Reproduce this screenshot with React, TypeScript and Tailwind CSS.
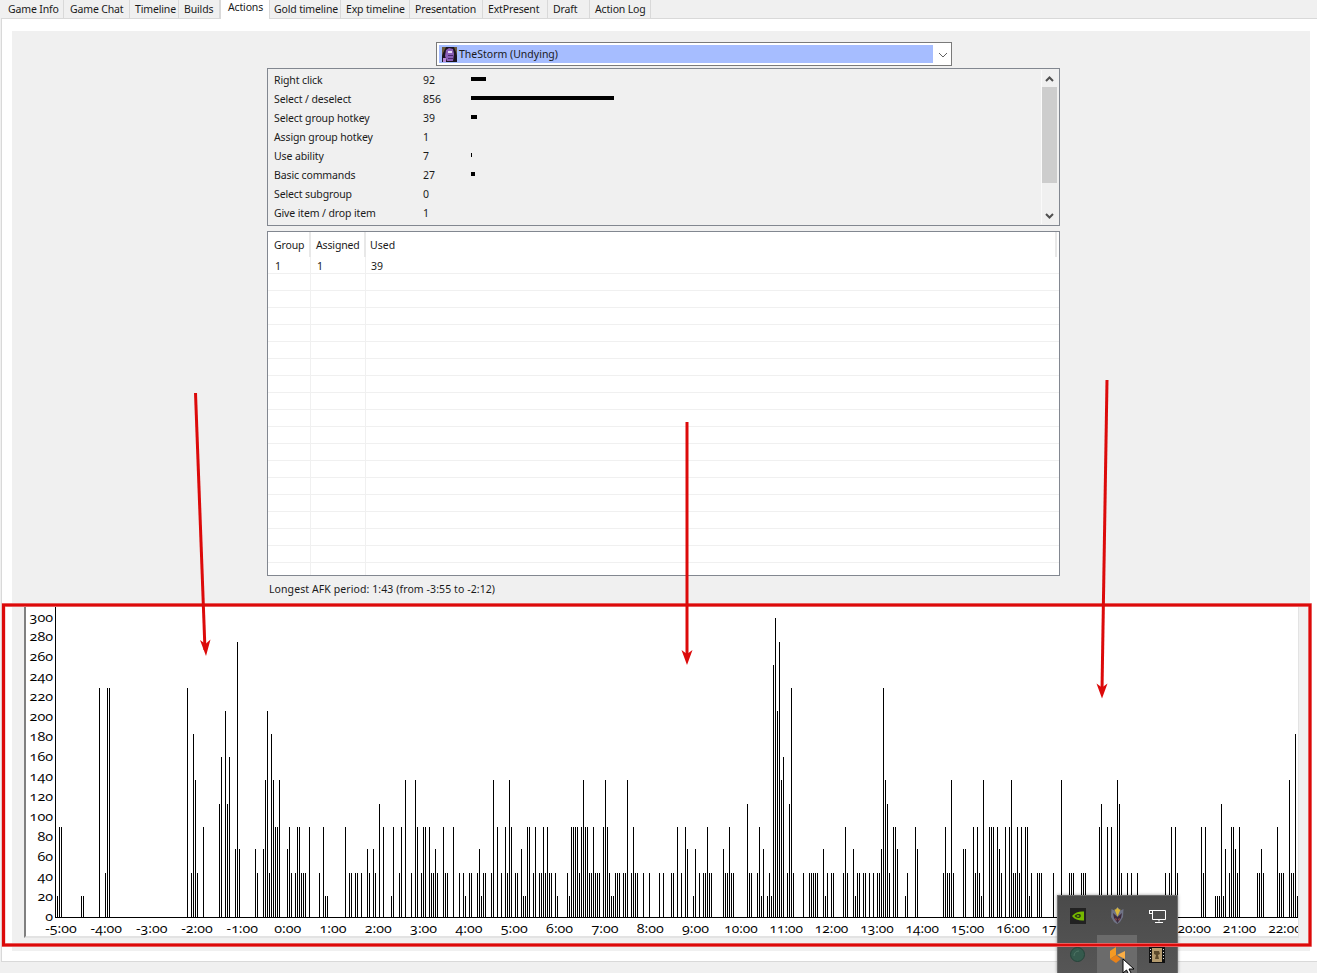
import React from "react";

const tabs = [
  { label: "Game Info", w: 62, pl: 6 },
  { label: "Game Chat", w: 66, pl: 6 },
  { label: "Timeline", w: 49, pl: 5 },
  { label: "Builds", w: 41, pl: 5 },
  { label: "Actions", w: 50, pl: 7, active: true },
  { label: "Gold timeline", w: 71, pl: 4 },
  { label: "Exp timeline", w: 69, pl: 5 },
  { label: "Presentation", w: 73, pl: 5 },
  { label: "ExtPresent", w: 65, pl: 5 },
  { label: "Draft", w: 42, pl: 5 },
  { label: "Action Log", w: 61, pl: 5 },
];

const stats = [
  { name: "Right click", value: "92", bar: 15 },
  { name: "Select / deselect", value: "856", bar: 143 },
  { name: "Select group hotkey", value: "39", bar: 6 },
  { name: "Assign group hotkey", value: "1", bar: 0 },
  { name: "Use ability", value: "7", bar: 1 },
  { name: "Basic commands", value: "27", bar: 4 },
  { name: "Select subgroup", value: "0", bar: 0 },
  { name: "Give item / drop item", value: "1", bar: 0 },
];

const LEVEL: Record<string, number> = { a: 21, b: 44, c: 68, d: 90, e: 113, f: 137, g: 160, h: 183, i: 206, j: 229, k: 252, l: 275, m: 299 };

const BARS =
  "57a 59d 61d 81a 83a 99j 105b 107j 109j 187j 191b 193h 195f 197b 203d 219e 221g 225i 227e 229g 235c 237l 239c 255c 257b 263c 265f 267i 269b 271h 273f 275d 277d 279f 287c 289d 291b 295b 297d 299d 301b 303b 305b 309d 319b 323d 325a 327a " +
  "345d 349b 351b 355b 357b 361b 367c 369b 373c 375b 379e 383d 391a 393d 399b 401d 405f 411b 415f 417d 421b 423d 425d 429d 431b 433b 435c 437b 443d 445b 447b 453d 459b 463b 465a 469b 471b 477b 479c 481a 483b 485b 491b 493f 497d 501b 505d 507b 509f 511d 515b 517b 521c 523a 525a 527d 529d 533b 535d 539b 541b 543d 545b 547d 549b 551b 555b 557a 567b 569a 571d 573d 575d 577d 579b 581d 583f 585d 587d 589b 591b 593d 595b 597b 599b 603d 605f 607d 609b 611a 613a 615b 617b 619b 623b 625b 627f 631b 633d 635b 637b 643b 649b 659b " +
  "663b 671b 673b 677d 681b 685d 687c 693a 695c 699b 703b 705b 707d 709b 711b 723c 725b 727b 729d 731b 733b 747e 749b 751b 757b 759d 761a 763c 767a 769b 771a 773k 775m 777i 779l 781f 783g 787b 789e 791j 793b 803b 809b 811b 813b 815b 817b 823c 825a 827b 831b 833b 843b 845d 847b 853c 855a 857b 859b 863b 865b 869b 873b 877b 879b 881c 883j 885f 887e 889b 893d 895d 897c 905a 907b 915d 917c 943b 945d 947b 949b 951f 953b 963c 965c 973d 975b 977d 979b 981a 983f " +
  "989d 991d 993d 997d 999c 1001b 1005d 1009d 1011f 1013b 1015b 1017d 1019b 1021d 1025d 1027d 1029a 1031b 1037b 1039b 1041b 1053b 1061f 1069b 1071b 1073b 1081b 1083b 1085b 1099d 1101e 1107d 1111d 1117f 1119e 1121b 1127b 1131b 1137b 1165b 1169b 1171d 1175d 1177b 1201d 1203b 1205d 1215a 1217a 1219a 1221e 1223a 1225c 1229b 1231d 1233d 1235c 1237b 1239d 1257b 1259b 1261c 1263b 1277d 1279b 1281b 1283b 1289f 1291b 1293b 1295h 1297a";

const bars = BARS.split(" ").map((s) => ({ x: parseInt(s, 10), h: LEVEL[s[s.length - 1]] }));

const xLabels = ["-5:00", "-4:00", "-3:00", "-2:00", "-1:00", "0:00", "1:00", "2:00", "3:00", "4:00", "5:00", "6:00", "7:00", "8:00", "9:00", "10:00", "11:00", "12:00", "13:00", "14:00", "15:00", "16:00", "17:00", "18:00", "19:00", "20:00", "21:00", "22:00"];
const yLabels = Array.from({ length: 16 }, (_, i) => i * 20);

function Chart() {
  return (
    <svg viewBox="26 606 1272 330" className="block w-[1272px] h-[330px] bg-white oldstyle-nums">
      <line x1="55.5" y1="606" x2="55.5" y2="918" stroke="#000" />
      <line x1="55" y1="917.5" x2="1298" y2="917.5" stroke="#000" />
      {bars.map((b) => (
        <rect key={b.x} x={b.x} y={917 - b.h} width="1" height={b.h} fill="#000" />
      ))}
      <g fontFamily="'Open Sans', sans-serif" fontSize="13" fill="#000" style={{ fontFeatureSettings: '"onum"' }}>
        {yLabels.map((v, i) => {
          const s = String(v);
          const w = s.length * 7.8;
          return (
            <text key={v} x={53 - w} y={920.5 - i * 19.93} textLength={w} lengthAdjust="spacingAndGlyphs">
              {s}
            </text>
          );
        })}
        {xLabels.map((s, i) => {
          const w = s[0] === "-" ? 31.5 : s.length === 4 ? 27 : 33.5;
          return (
            <text key={s} x={61 + 45.33 * i - w / 2} y={933} textLength={w} lengthAdjust="spacingAndGlyphs">
              {s}
            </text>
          );
        })}
      </g>
    </svg>
  );
}

function HeroIcon() {
  return (
    <svg width="15" height="15" viewBox="0 0 15 15" className="shrink-0">
      <rect width="15" height="15" fill="#1c1420" />
      <path d="M0 0h4L1 6 0 9zM15 0h-3l2 5 1 4z" fill="#6b5a3a" />
      <path d="M4 3l3-2 4 1 1 5-1 7H5L3 9z" fill="#8b5fb8" />
      <path d="M6 4h4v2H6z" fill="#e8d8f8" />
      <path d="M6 8h5v1H6zM6 11h5v1H6z" fill="#4a2a70" />
      <path d="M1 11h3v4H1z" fill="#b98ad8" />
    </svg>
  );
}

function Tray() {
  return (
    <div className="absolute left-[1057px] top-[895px] w-[121px] h-[78px] bg-gradient-to-b from-[#4a4a4a] to-[#565656] border-t border-x border-[#6e6e6e] shadow-[0_0_3px_rgba(0,0,0,0.4)]">
      <div className="grid grid-cols-[39px_40px_40px] grid-rows-[39px_39px] h-full">
        <div className="flex items-center justify-center">
          <svg width="16" height="16" viewBox="0 0 16 16">
            <rect width="16" height="16" fill="#222" />
            <path d="M2 8c3-4 8-5 12-4.500v9C10 13 5 12 2 8z" fill="#76b900" />
            <path d="M4.500 8c2-2 4-2.500 6-1.500 1 1.500 0 3.500-2 3.500-2 0-3-1-4-2z" fill="#2a3a10" />
            <path d="M6.500 8c1-1 2-1 3 0-1 1-2 1-3 0z" fill="#8fd400" />
          </svg>
        </div>
        <div className="flex items-center justify-center">
          <svg width="13" height="17" viewBox="0 0 13 17">
            <path d="M0.500 2l3 1.500L6.500 0l3 3.500 3-1.500-0.500 8-3 5-3 2-3-2-3-5z" fill="#6f7386" />
            <path d="M2 6l4.500 4L11 6l-1 5-3.500 5L3 11z" fill="#3c2a3c" />
            <path d="M3.500 2.500l3 7 3-7-1.500 0-1.500-2-1.500 2z" fill="#d9b63a" />
            <path d="M4 11l2 1-1 2zM9 11l-2 1 1 2z" fill="#a14a4a" />
          </svg>
        </div>
        <div className="flex items-center justify-center">
          <svg width="17" height="14" viewBox="0 0 17 14" fill="none" stroke="#fff">
            <path d="M3.500 1.500h13v9h-13M3.500 5v5.500M10 10.500v2M6 13.500h8" />
            <rect x="0.500" y="1.500" width="3" height="3" />
          </svg>
        </div>
        <div className="flex items-center justify-center">
          <svg width="15" height="15" viewBox="0 0 15 15">
            <circle cx="7.500" cy="7.500" r="7" fill="#355a4d" stroke="#26443a" />
            <path d="M4 9c0-3 2-5 5-5" fill="none" stroke="#4f7565" />
          </svg>
        </div>
        <div className="flex items-center justify-center bg-[#6b6b6b]">
          <svg width="15" height="16" viewBox="0 0 15 16">
            <path d="M0 4l6-4v8l-6 4z" fill="#f59a23" />
            <path d="M0 12l6-4 5 4-5 4z" fill="#e8821a" />
            <path d="M7 8l8-4v8z" fill="#fbae45" />
          </svg>
        </div>
        <div className="flex items-center justify-center">
          <svg width="16" height="16" viewBox="0 0 16 16">
            <rect width="16" height="16" fill="#111" />
            <rect x="3" y="1" width="10" height="14" fill="#b49b6e" />
            <path d="M5 4h5l1 3-2 1 1 4H6l1-4-2-1z" fill="#5c4a2c" />
            <path d="M1 2h1v1H1zM1 5h1v1H1zM1 8h1v1H1zM1 11h1v1H1zM14 2h1v1h-1zM14 5h1v1h-1zM14 8h1v1h-1zM14 11h1v1h-1z" fill="#ddd" />
          </svg>
        </div>
      </div>
    </div>
  );
}

function Annotations() {
  return (
    <svg viewBox="0 0 1317 973" className="absolute left-0 top-0 w-[1317px] h-[973px] pointer-events-none">
      <rect x="3.500" y="605" width="1306.500" height="340" fill="none" stroke="#f3b0b0" strokeWidth="4" />
      <rect x="3.500" y="605" width="1306.500" height="340" fill="none" stroke="#dc0a0a" strokeWidth="3" />
      <g stroke="#dc0a0a" strokeWidth="3" fill="none">
        <line x1="195.500" y1="393" x2="205" y2="650" />
        <line x1="687" y1="422" x2="687" y2="656" />
        <line x1="1107" y1="380" x2="1102" y2="690" />
      </g>
      <g fill="#dc0a0a">
        <path d="M206 656l-6-16 5.500 4 5-4.500z" />
        <path d="M687 665l-5.500-15 5.500 4 5.500-4z" />
        <path d="M1102 698.500l-5.500-15 5.500 4 5.500-4z" />
      </g>
    </svg>
  );
}

export default function App() {
  return (
    <div className="font-['Noto_Sans',sans-serif] relative w-[1317px] h-[973px] overflow-hidden bg-[#f0f0f0] text-[10.5px] leading-none text-[#1a1a1a] flex flex-col">
      <div className="flex h-[18px] pl-[2px] items-start whitespace-nowrap tracking-[-0.15px]">
        {tabs.map((t) =>
          t.active ? (
            <div key={t.label} style={{ width: t.w, paddingLeft: t.pl }} className="relative z-10 h-[19px] bg-white border-x border-[#d9d9d9] pt-[1px] flex items-start">
              <span className="leading-[12px]">{t.label}</span>
            </div>
          ) : (
            <div key={t.label} style={{ width: t.w, paddingLeft: t.pl }} className="h-[18px] border-r border-[#d9d9d9] pt-[3px] flex items-start">
              <span className="leading-[12px]">{t.label}</span>
            </div>
          )
        )}
      </div>
      <div className="ml-[1px] h-[944px] bg-white border-l border-t border-b border-[#d9d9d9] pl-[10px] pt-[12px]">
        <div className="w-[1298px] h-[920px] bg-[#f0f0f0] pt-[11px] flex flex-col">
          <div className="ml-[424px] w-[516px] h-[24px] bg-white border border-[#7a7a7a] p-[2px] pr-0 flex items-center">
            <div className="w-[494px] h-[18px] bg-[#a6bdff] flex items-center pl-[3px] gap-[2px]">
              <HeroIcon />
              <span className="leading-[12px]">TheStorm (Undying)</span>
            </div>
            <div className="flex-1 flex items-center justify-center pt-[2px] pl-[1px]">
              <svg width="10" height="6" viewBox="0 0 10 6" fill="none" stroke="#606060">
                <path d="M1 1l4 4 4-4" />
              </svg>
            </div>
          </div>

          <div className="mt-[2px] ml-[255px] w-[793px] h-[158px] border border-[#828790] flex">
            <div className="flex-1 pt-[1px] pl-[6px]">
              {stats.map((s) => (
                <div key={s.name} className="h-[19px] flex items-center">
                  <span className="w-[149px] leading-[12px] tracking-[-0.12px]">{s.name}</span>
                  <span className="w-[48px] leading-[12px]">{s.value}</span>
                  <div style={{ width: s.bar }} className={`bg-black h-[4px] mb-[2px] ${s.bar === 0 ? "hidden" : ""}`} />
                </div>
              ))}
            </div>
            <div className="w-[16px] border-l border-[#fafafa] flex flex-col items-center my-[1px] mr-[2px]">
              <div className="h-[17px] flex items-center justify-center">
                <svg width="9" height="6" viewBox="0 0 9 6" fill="none" stroke="#505050" strokeWidth="2">
                  <path d="M1 5l3.500-3.500L8 5" />
                </svg>
              </div>
              <div className="w-full h-[96px] bg-[#cdcdcd]" />
              <div className="mt-auto h-[17px] flex items-center justify-center">
                <svg width="9" height="6" viewBox="0 0 9 6" fill="none" stroke="#505050" strokeWidth="2">
                  <path d="M1 1l3.500 3.500L8 1" />
                </svg>
              </div>
            </div>
          </div>

          <div className="mt-[5px] ml-[255px] w-[793px] h-[345px] bg-white border border-[#828790] overflow-hidden">
            <div className="flex h-[25px] pr-[2px]">
              <div className="w-[43px] border-r-2 border-[#e8e8e8] pl-[6px] pt-[7px] tracking-[-0.15px]"><span className="leading-[12px]">Group</span></div>
              <div className="w-[55px] border-r-2 border-[#e8e8e8] pl-[5px] pt-[7px] tracking-[-0.15px]"><span className="leading-[12px]">Assigned</span></div>
              <div className="flex-1 border-r-2 border-[#e8e8e8] pl-[4px] pt-[7px]"><span className="leading-[12px]">Used</span></div>
            </div>
            {Array.from({ length: 19 }, (_, i) => (
              <div key={i} className="flex h-[17px] border-b border-[#f0f0f0]">
                <div className="w-[43px] border-r border-[#f0f0f0] pl-[7px] pt-[3px] leading-[12px]">{i === 0 ? "1" : ""}</div>
                <div className="w-[55px] border-r border-[#f0f0f0] pl-[6px] pt-[3px] leading-[12px]">{i === 0 ? "1" : ""}</div>
                <div className="flex-1 pl-[5px] pt-[3px] leading-[12px]">{i === 0 ? "39" : ""}</div>
              </div>
            ))}
          </div>

          <div className="ml-[257px] mt-[7px] h-[23px] leading-[12px] tracking-[0.09px]">Longest AFK period: 1:43 (from -3:55 to -2:12)</div>

          <div className="ml-[12px] w-[1275px] border-l-2 border-l-[#808080] border-r border-r-[#e3e3e3] border-b-2 border-b-[#e3e3e3]">
            <Chart />
          </div>
        </div>
      </div>
      <Tray />
      <div className="absolute left-[1122px] top-[958px]">
        <svg width="14" height="18" viewBox="0 0 14 18">
          <path d="M1 1v14l3.500-3 2.500 5 2.500-1-2.500-5h5z" fill="#fff" stroke="#000" />
        </svg>
      </div>
      <Annotations />
    </div>
  );
}
